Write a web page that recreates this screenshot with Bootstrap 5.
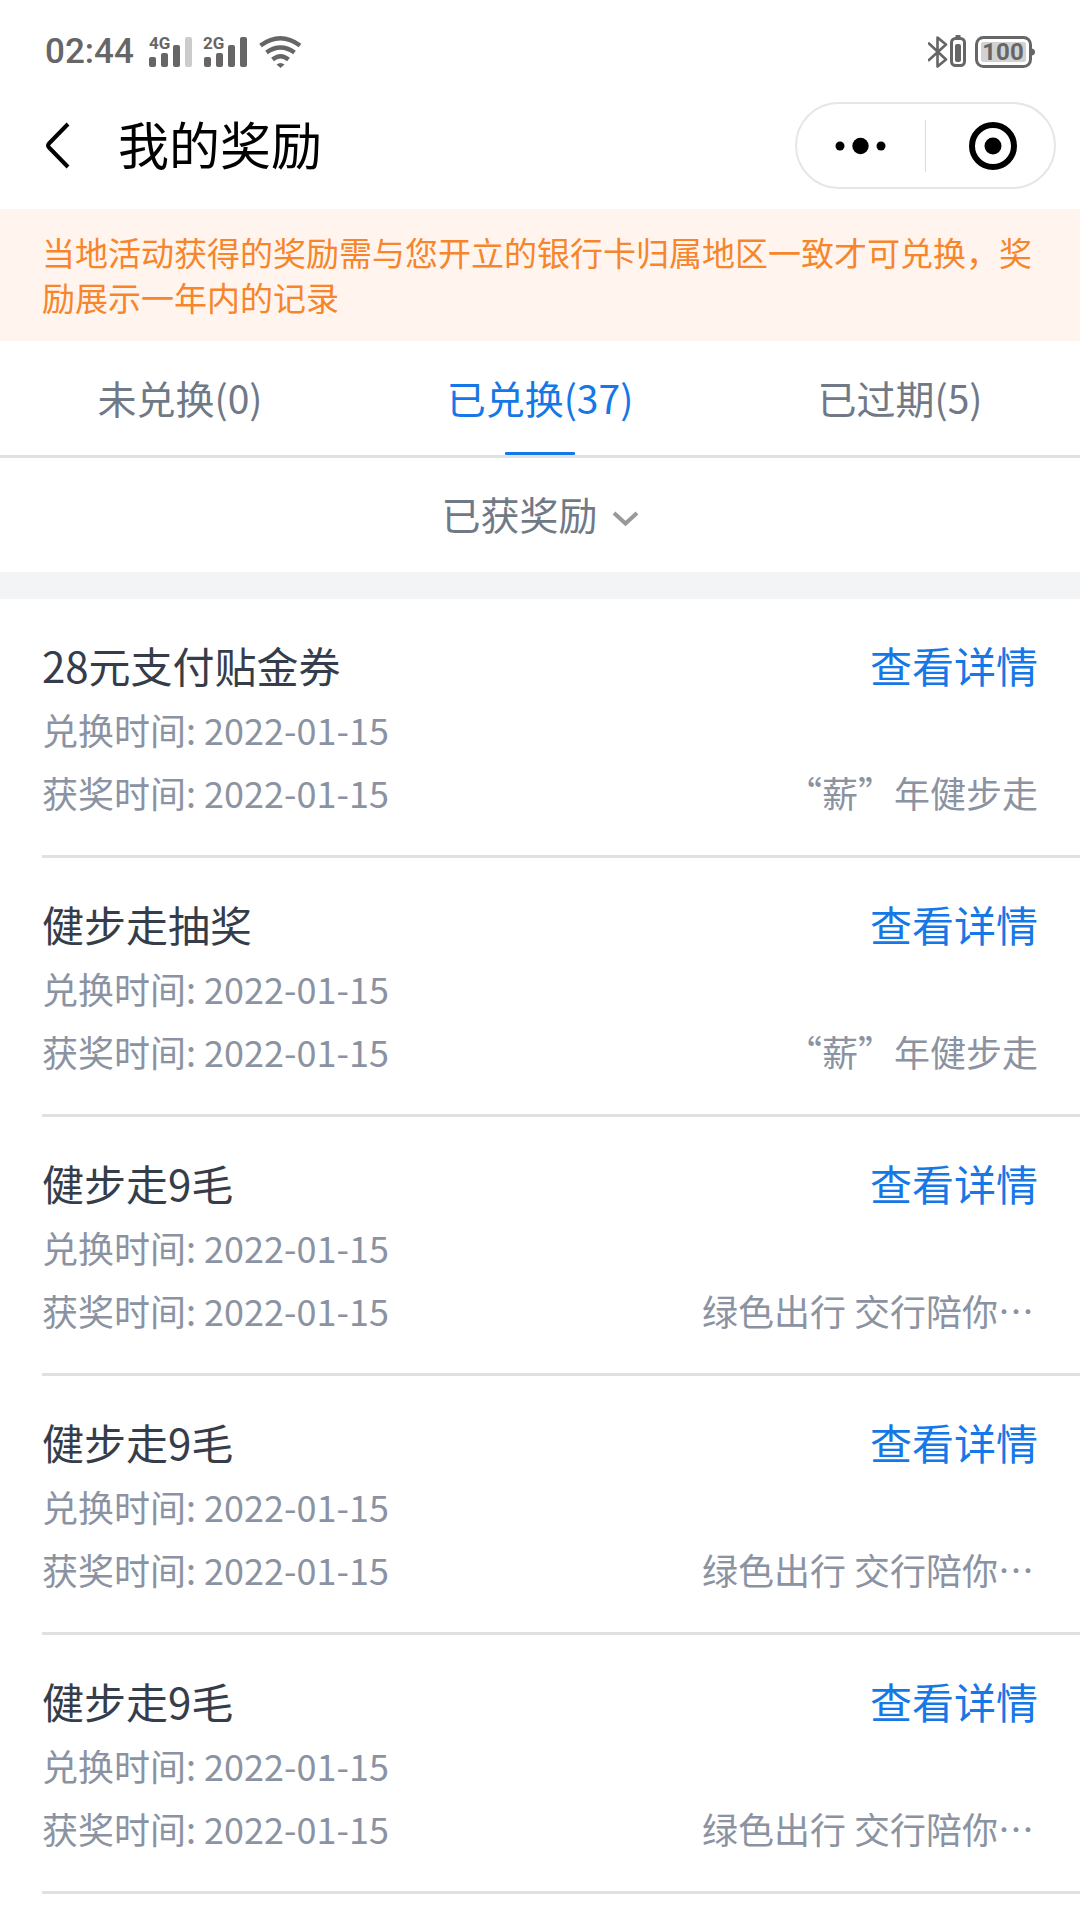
<!DOCTYPE html>
<html lang="zh-CN">
<head>
<meta charset="utf-8">
<meta name="viewport" content="width=device-width, initial-scale=1">
<title>我的奖励</title>
<link href="https://cdn.jsdelivr.net/npm/bootstrap@5.3.0/dist/css/bootstrap.min.css" rel="stylesheet">
<style>
  body { font-family: "Noto Sans CJK SC", sans-serif; background: #fff; color: #363d4a; overflow-x: hidden; }
  svg { display: block; flex: none; }
  button, select { font-family: inherit; }

  .status-bar { padding: 30px 44px 8px 45px; color: #666; }
  .clock { font: 500 35px/32px Roboto, sans-serif; margin-right: 14px; }
  .status-bar text { font-family: Roboto, sans-serif; font-weight: 700; fill: currentColor; }

  .title-bar { height: 127px; padding: 0 24px 0 42px; color: #000; }
  .page-title { font-size: 51px; line-height: 80px; font-weight: 400; margin-left: 46px; padding-bottom: 6px; }
  .capsule { width: 261px; height: 87px; border: 2px solid #e6e6e6; border-radius: 44px; }
  .capsule-more { width: 128px; }
  .capsule-close { width: 128px; padding-left: 6px !important; }
  .capsule-divider { width: 1px; height: 52px; background: #dcdcdc; }

  .notice { background: #fff5ee; color: #f6852b; font-size: 33px; line-height: 45px; padding: 21px 42px; }

  .tab-strip { border-bottom: 3px solid #e0e1e3; }
  .tab-item { height: 114px; font-size: 39px; line-height: 56px; color: #707986; padding-bottom: 3px; }
  .tab-item.active { color: #1677e6; }
  .tab-item.active::after { content: ""; position: absolute; left: 50%; bottom: 0; width: 70px; height: 3px; margin-left: -35px; background: #1677e6; border-radius: 1px; }

  .filter-row { height: 114px; gap: 13px; }
  .filter-row svg { margin-top: 6px; }
  .filter-select { appearance: none; border: 0; padding: 0 0 4px; background: none; font-size: 39px; line-height: 56px; color: #707986; }
  .band { height: 27px; background: #f3f4f6; }

  .reward { margin-left: 42px; padding: 32px 42px 31px 0; border-bottom: 3px solid #e0e1e3; }
  .reward-name, .reward-link { font-size: 42px; line-height: 67px; font-weight: 400; }
  .reward-link { color: #1677e6; }
  .reward-meta { font-size: 36px; line-height: 63px; color: #8b93a2; }
</style>
</head>
<body>

<div class="status-bar d-flex justify-content-between align-items-center">
  <div class="d-flex align-items-center">
    <span class="clock">02:44</span>
    <svg width="154" height="44" viewBox="148 30 154 44" fill="currentColor" aria-hidden="true">
      <text x="149" y="49" font-size="17">4G</text>
      <rect x="149" y="57" width="7" height="10" rx="2"/>
      <rect x="161" y="53" width="7" height="14" rx="2"/>
      <rect x="173" y="45" width="7" height="22" rx="2"/>
      <rect x="185" y="37" width="7" height="30" rx="2" fill="#ccc"/>
      <text x="203" y="49" font-size="17">2G</text>
      <rect x="204" y="57" width="7" height="10" rx="2"/>
      <rect x="216" y="53" width="7" height="14" rx="2"/>
      <rect x="228" y="45" width="7" height="22" rx="2"/>
      <rect x="240" y="37" width="7" height="30" rx="2"/>
      <g fill="none" stroke="currentColor" stroke-width="4.4">
        <path d="M260.500 45.500Q280.500 31 300 45.500"/>
        <path d="M266.500 52.500Q280.500 42.500 294.500 52.500"/>
        <path d="M272.500 59.500Q280.500 53 288.500 59.500"/>
      </g>
      <path d="M276.500 64.500Q280.500 61.500 284.500 64.500L280.500 68Z"/>
    </svg>
  </div>
  <svg width="108" height="34" viewBox="928 35 108 34" fill="none" stroke="currentColor" aria-hidden="true">
    <path d="M929 43.500L946 59.500L937.500 66.500V37.500L946 44.500L929 60" stroke-width="2.600" stroke-linejoin="round" stroke-linecap="round"/>
    <rect x="951.500" y="38.500" width="13" height="27" rx="4" stroke-width="3"/>
    <rect x="955" y="44" width="6" height="18" rx="2" fill="currentColor" stroke="none"/>
    <path d="M955.500 36.500H960.500" stroke-width="3"/>
    <rect x="976.500" y="37.500" width="54" height="29" rx="7" stroke-width="3"/>
    <rect x="981" y="42" width="45" height="20" rx="2" fill="#d2d2d2" stroke="none"/>
    <path d="M1032 48.500Q1035 49 1035 52T1032 55.500Z" fill="currentColor" stroke="none"/>
    <text x="1003" y="60" font-size="24" text-anchor="middle" stroke="none">100</text>
  </svg>
</div>

<header class="title-bar d-flex align-items-center">
  <button type="button" class="btn p-0 border-0 rounded-0" aria-label="返回">
    <svg width="30" height="50" viewBox="0 0 30 50" fill="none" stroke="#000" stroke-width="4"><path d="M26 3L7 22.500Q5 24.500 7 26.500L26 46"/></svg>
  </button>
  <h1 class="page-title mb-0">我的奖励</h1>
  <div class="capsule d-flex align-items-center ms-auto">
    <button type="button" class="capsule-more btn p-0 border-0 d-flex justify-content-center" aria-label="更多">
      <svg width="52" height="18" viewBox="0 0 52 18"><circle cx="5" cy="9" r="4.500"/><circle cx="25.500" cy="9" r="8.200"/><circle cx="46" cy="9" r="4.500"/></svg>
    </button>
    <span class="capsule-divider"></span>
    <button type="button" class="capsule-close btn p-0 border-0 d-flex justify-content-center" aria-label="关闭">
      <svg width="48" height="48" viewBox="0 0 48 48"><circle cx="24" cy="24" r="21" fill="none" stroke="#000" stroke-width="6"/><circle cx="24" cy="24" r="8.500"/></svg>
    </button>
  </div>
</header>

<main>
  <p class="notice mb-0">当地活动获得的奖励需与您开立的银行卡归属地区一致才可兑换，奖励展示一年内的记录</p>

  <div class="tab-strip row g-0" role="tablist">
    <button type="button" role="tab" class="tab-item btn rounded-0 border-0 pt-0 px-0 col">未兑换(0)</button>
    <button type="button" role="tab" aria-selected="true" class="tab-item btn rounded-0 border-0 pt-0 px-0 col active position-relative">已兑换(37)</button>
    <button type="button" role="tab" class="tab-item btn rounded-0 border-0 pt-0 px-0 col">已过期(5)</button>
  </div>

  <label class="filter-row d-flex justify-content-center align-items-center">
    <select class="filter-select" aria-label="奖励类型"><option>已获奖励</option></select>
    <svg width="27" height="18" viewBox="0 0 27 18" fill="none" stroke="#999" stroke-width="4"><path d="M2 4L13.500 14.500L25 4"/></svg>
  </label>
  <div class="band"></div>

  <ul class="list-unstyled mb-0">
    <li class="reward">
      <div class="d-flex justify-content-between"><h2 class="reward-name mb-0">28元支付贴金券</h2><a href="#" class="reward-link text-decoration-none">查看详情</a></div>
      <div class="reward-meta">兑换时间: 2022-01-15</div>
      <div class="reward-meta d-flex justify-content-between"><span>获奖时间: 2022-01-15</span><span>“薪”年健步走</span></div>
    </li>
    <li class="reward">
      <div class="d-flex justify-content-between"><h2 class="reward-name mb-0">健步走抽奖</h2><a href="#" class="reward-link text-decoration-none">查看详情</a></div>
      <div class="reward-meta">兑换时间: 2022-01-15</div>
      <div class="reward-meta d-flex justify-content-between"><span>获奖时间: 2022-01-15</span><span>“薪”年健步走</span></div>
    </li>
    <li class="reward">
      <div class="d-flex justify-content-between"><h2 class="reward-name mb-0">健步走9毛</h2><a href="#" class="reward-link text-decoration-none">查看详情</a></div>
      <div class="reward-meta">兑换时间: 2022-01-15</div>
      <div class="reward-meta d-flex justify-content-between"><span>获奖时间: 2022-01-15</span><span class="pe-1">绿色出行 交行陪你…</span></div>
    </li>
    <li class="reward">
      <div class="d-flex justify-content-between"><h2 class="reward-name mb-0">健步走9毛</h2><a href="#" class="reward-link text-decoration-none">查看详情</a></div>
      <div class="reward-meta">兑换时间: 2022-01-15</div>
      <div class="reward-meta d-flex justify-content-between"><span>获奖时间: 2022-01-15</span><span class="pe-1">绿色出行 交行陪你…</span></div>
    </li>
    <li class="reward">
      <div class="d-flex justify-content-between"><h2 class="reward-name mb-0">健步走9毛</h2><a href="#" class="reward-link text-decoration-none">查看详情</a></div>
      <div class="reward-meta">兑换时间: 2022-01-15</div>
      <div class="reward-meta d-flex justify-content-between"><span>获奖时间: 2022-01-15</span><span class="pe-1">绿色出行 交行陪你…</span></div>
    </li>
  </ul>
</main>

<script src="https://cdn.jsdelivr.net/npm/bootstrap@5.3.0/dist/js/bootstrap.bundle.min.js"></script>
</body>
</html>
